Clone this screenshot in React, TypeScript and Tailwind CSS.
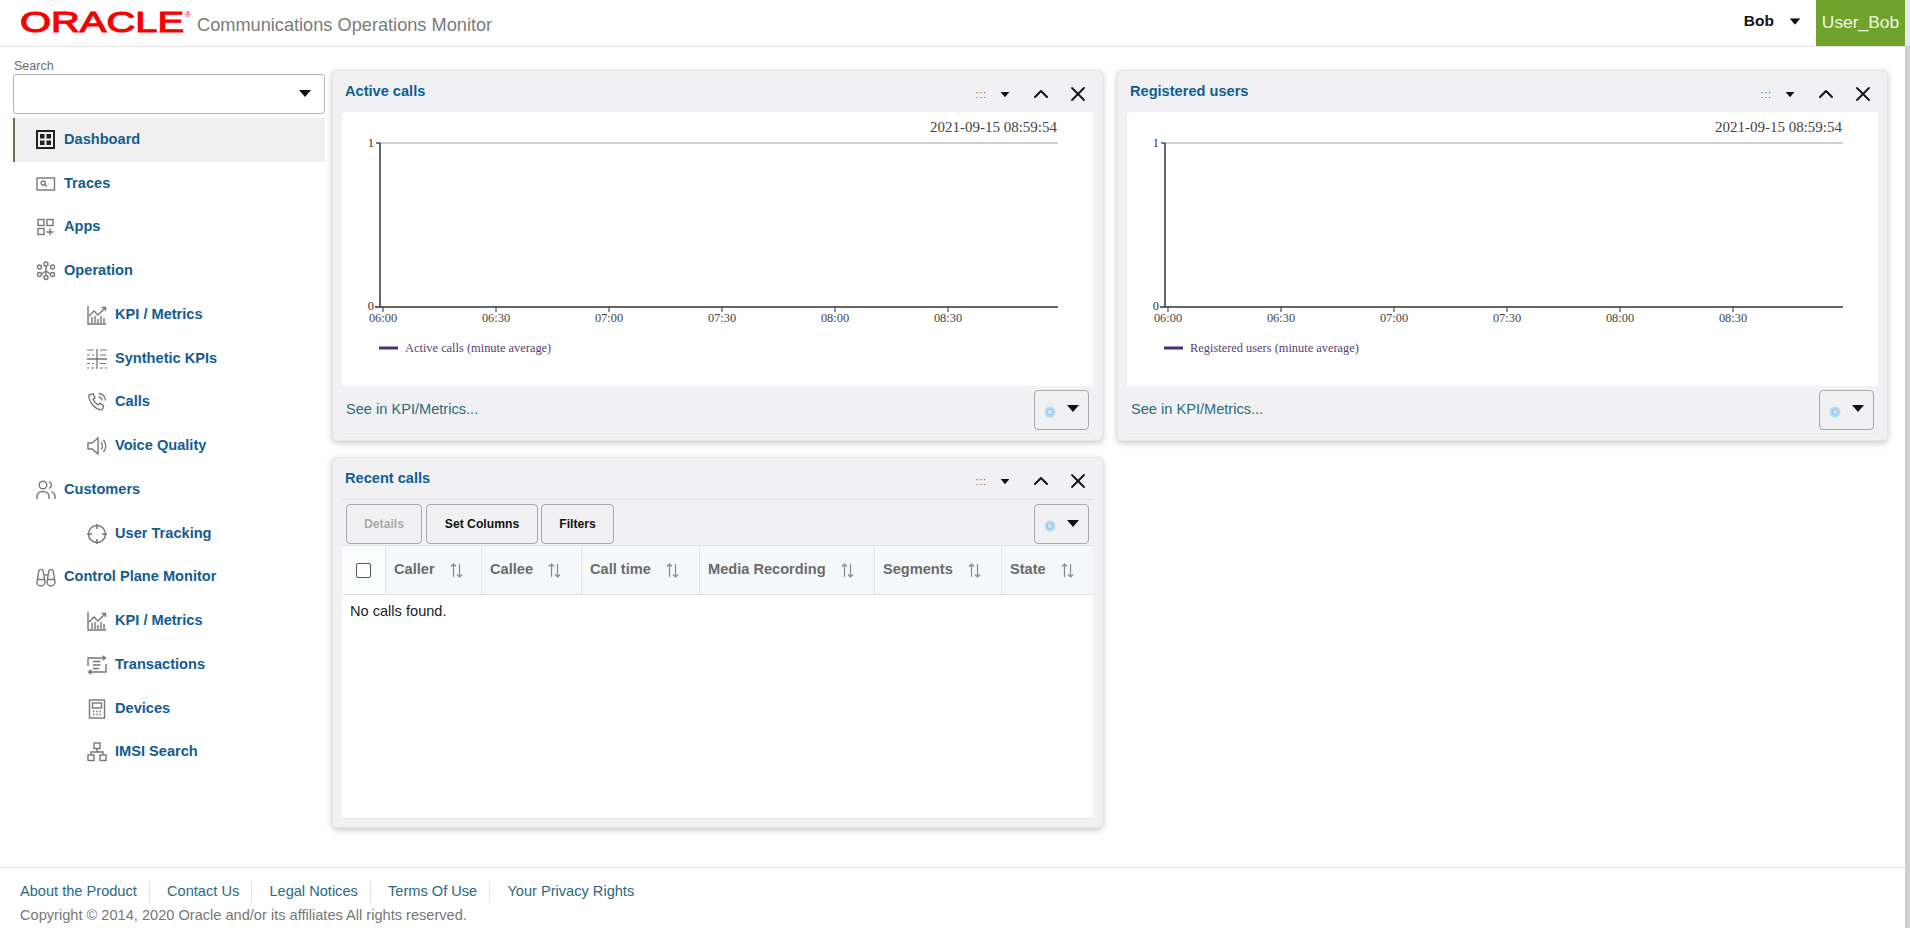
import { ChevronUp, X } from "lucide-react";
import type { ReactNode } from "react";

const ticks = ["06:00", "06:30", "07:00", "07:30", "08:00", "08:30"];

function Caret({ className = "" }: { className?: string }) {
  return (
    <svg width="12" height="7" viewBox="0 0 12 7" className={className}>
      <path d="M0 0h12L6 7z" fill="#111" />
    </svg>
  );
}

function Ic({ children }: { children: ReactNode }) {
  return (
    <svg width="20" height="20" viewBox="0 0 20 20" fill="none" stroke="#777" strokeWidth="1.4" className="shrink-0">
      {children}
    </svg>
  );
}

const icons: Record<string, ReactNode> = {
  dashboard: (
    <svg width="20" height="19" viewBox="0 0 20 19" className="shrink-0">
      <rect x="1" y="1" width="17" height="17" fill="none" stroke="#222" strokeWidth="2" />
      <path d="M4 4h4.5v4.5H4zM10.5 4H15v4.5h-4.5zM4 10.5h4.5V15H4zM10.5 10.5H15V15h-4.5z" fill="#222" />
    </svg>
  ),
  traces: (
    <Ic>
      <rect x="1" y="4" width="17.5" height="12" />
      <circle cx="7.2" cy="9" r="2" />
      <path d="M8.7 10.5l2 2" />
    </Ic>
  ),
  apps: (
    <Ic>
      <rect x="2" y="2.5" width="6" height="6" />
      <rect x="11" y="2.5" width="6" height="6" />
      <rect x="2" y="11.500" width="6" height="6" />
      <path d="M14 11.500v6.500M10.500 15h7" />
    </Ic>
  ),
  operation: (
    <Ic>
      <circle cx="10" cy="3" r="2" />
      <circle cx="3.500" cy="6" r="2" />
      <circle cx="16.500" cy="6" r="2" />
      <circle cx="3.500" cy="13.500" r="2" />
      <circle cx="16.500" cy="13.500" r="2" />
      <circle cx="10" cy="16.500" r="2" />
      <path d="M10 5v9.500M5.500 13l4.500-3 4.500 3" />
    </Ic>
  ),
  kpi: (
    <Ic>
      <path d="M1 1v18h18" />
      <path d="M2 11l5-5 4 4 7-7M14.500 2.500H18.500V6" />
      <path d="M5 18v-6M8 18v-7M11 18v-4M14 18v-7M17 18v-5" />
    </Ic>
  ),
  synthetic: (
    <svg width="20" height="20" viewBox="0 0 20 20" fill="none" stroke="#777" strokeWidth="1.100" className="shrink-0">
      <path d="M10 0v20M0 10h20" strokeWidth="1.300" />
      <path d="M0 1h7M13 1h7M0 6h3M5 6h2M13 6h6M0 14.500h3M5 14.500h2M13 14.500h6M0 19h2M4 19h3M13 19h3M18 19h2" />
    </svg>
  ),
  calls: (
    <Ic>
      <path d="M3 2.500l3.200-.8 1.800 4-1.900 1.600c.8 2.200 2.600 4.400 5 5.600l1.800-1.700 3.600 2.400-.8 3c-.3 1-1.200 1.400-2.300 1.200C7.700 16.500 2.800 11 1.800 5c-.2-1.200.2-2.200 1.200-2.500z" />
      <path d="M11.500 1.500a7 7 0 0 1 7 7M11.500 5a3.500 3.500 0 0 1 3.500 3.500" />
    </Ic>
  ),
  voice: (
    <Ic>
      <path d="M1 7v6h4l6 5V2L5 7z" />
      <path d="M14 6.500a5 5 0 0 1 0 7M16.500 4a9 9 0 0 1 0 12" />
    </Ic>
  ),
  customers: (
    <Ic>
      <circle cx="7" cy="5" r="3.800" />
      <path d="M1 19v-2.500c0-3 2.500-5 6-5s6 2 6 5V19" />
      <path d="M13 1.800a3.500 3.500 0 0 1 0 6.600M15.500 11.800c2 .8 3.500 2.400 3.500 4.700V19" />
    </Ic>
  ),
  tracking: (
    <Ic>
      <circle cx="10" cy="10" r="8.500" strokeWidth="1.500" />
      <path d="M10 0v5M10 15v5M0 10h5M15 10h5" strokeWidth="1.500" />
    </Ic>
  ),
  binoculars: (
    <Ic>
      <path d="M1 15L2.800 4a2.300 2.300 0 0 1 4.400 0L9 15a4 4 0 0 1-8 0z" />
      <path d="M11 15L12.800 4a2.300 2.300 0 0 1 4.400 0L19 15a4 4 0 0 1-8 0z" />
      <path d="M1.200 12.500h7.600M11.200 12.500h7.600M8.500 8h3" />
    </Ic>
  ),
  transactions: (
    <Ic>
      <path d="M1 11V3h17M15.500 .8L18.500 3l-3 2.200" />
      <path d="M19 9v8H2M4.500 14.800L1.500 17l3 2.200" />
      <path d="M6 6.500h7.500M6 10h7.500M6 13.500h6" />
    </Ic>
  ),
  devices: (
    <Ic>
      <rect x="2.500" y="1" width="15" height="18" />
      <rect x="5.500" y="4" width="9" height="5" />
      <path d="M6 12.500h1.500M9.300 12.500h1.500M12.500 12.500H14M6 15.500h1.500M9.300 15.500h1.500M12.500 15.500H14" />
    </Ic>
  ),
  imsi: (
    <Ic>
      <rect x="7" y="1" width="6" height="5.500" />
      <rect x="1" y="13" width="6" height="5.500" />
      <rect x="13" y="13" width="6" height="5.500" />
      <path d="M10 6.500V10M4 13v-3h12v3" />
    </Ic>
  ),
};

const menu = [
  { label: "Dashboard", icon: "dashboard", active: true },
  { label: "Traces", icon: "traces" },
  { label: "Apps", icon: "apps" },
  { label: "Operation", icon: "operation" },
  { label: "KPI / Metrics", icon: "kpi", sub: true },
  { label: "Synthetic KPIs", icon: "synthetic", sub: true },
  { label: "Calls", icon: "calls", sub: true },
  { label: "Voice Quality", icon: "voice", sub: true },
  { label: "Customers", icon: "customers" },
  { label: "User Tracking", icon: "tracking", sub: true },
  { label: "Control Plane Monitor", icon: "binoculars" },
  { label: "KPI / Metrics", icon: "kpi", sub: true },
  { label: "Transactions", icon: "transactions", sub: true },
  { label: "Devices", icon: "devices", sub: true },
  { label: "IMSI Search", icon: "imsi", sub: true },
];

function PanelHeader({ title }: { title: string }) {
  return (
    <div className="flex h-[41px] items-center pl-[12px] pr-[12px]">
      <h2 className="text-[14.6px] font-bold text-[#0f5f94]">{title}</h2>
      <div className="ml-auto mt-[4px] flex items-center text-[#111]">
        <span className="mr-[12px] mt-[2px] text-[10px] leading-none tracking-[1px] text-[#555]">:::</span>
        <Caret className="mr-[18px] mt-[2px] scale-75" />
        <ChevronUp size={24} strokeWidth={2} className="mr-[13px]" />
        <X size={24} strokeWidth={1.8} />
      </div>
    </div>
  );
}

function SettingsButton() {
  return (
    <button className="flex h-[40px] w-[55px] items-center justify-center gap-[11px] rounded-[4px] border border-[#a8a8a8] bg-[#f1f1f3]">
      <svg width="12" height="12" viewBox="0 0 12 12" className="mt-[4px]">
        <circle cx="6" cy="6" r="5.500" fill="#b9d9f5" />
        <circle cx="6" cy="6" r="2.800" fill="#cfe4f7" stroke="#92c2ec" />
      </svg>
      <Caret className="-mt-[2px]" />
    </button>
  );
}

function Chart({ legend }: { legend: string }) {
  return (
    <svg width="751" height="274" viewBox="0 0 751 274" className="block">
      <g fontFamily="'Liberation Serif', serif">
        <text x="715" y="20" textAnchor="end" fontSize="15" fill="#444">2021-09-15 08:59:54</text>
        <line x1="34" y1="31" x2="716" y2="31" stroke="#cfcfcf" strokeWidth="2" />
        <line x1="38" y1="31" x2="38" y2="195" stroke="#333" strokeWidth="1.500" />
        <line x1="33" y1="195" x2="716" y2="195" stroke="#333" strokeWidth="1.500" />
        <line x1="34" y1="31" x2="38" y2="31" stroke="#333" />
        <text x="32" y="35" textAnchor="end" fontSize="12.400" fill="#333">1</text>
        <text x="32" y="198" textAnchor="end" fontSize="12.400" fill="#333">0</text>
        {ticks.map((t, i) => (
          <g key={t}>
            <line x1={41 + i * 113} y1="195" x2={41 + i * 113} y2="200" stroke="#333" />
            <text x={41 + i * 113} y="210" textAnchor="middle" fontSize="12.400" fill="#444">{t}</text>
          </g>
        ))}
        <line x1="37" y1="236" x2="56" y2="236" stroke="#4b2e6e" strokeWidth="3" />
        <text x="63" y="240" fontSize="12.400" fill="#5a3e74">{legend}</text>
      </g>
    </svg>
  );
}

function ChartPanel({ title, legend }: { title: string; legend: string }) {
  return (
    <section className="h-[371px] rounded-[5px] border border-[#e6e6e8] bg-[#f1f1f3] shadow-[0_2px_6px_rgba(0,0,0,0.22)]">
      <PanelHeader title={title} />
      <div className="mx-[9px] rounded-t-[4px] border-b border-[#e8e8ea]">
        <div className="rounded-t-[4px] bg-white">
          <Chart legend={legend} />
        </div>
        <div className="flex h-[47px] items-center justify-between pl-[4px] pr-[4px]">
          <a className="text-[14.6px] text-[#2a6a80]">See in KPI/Metrics...</a>
          <SettingsButton />
        </div>
      </div>
    </section>
  );
}

const columns = [
  { label: "Caller", w: "w-[96px]" },
  { label: "Callee", w: "w-[100px]" },
  { label: "Call time", w: "w-[118px]" },
  { label: "Media Recording", w: "w-[175px]" },
  { label: "Segments", w: "w-[127px]" },
  { label: "State", w: "flex-1" },
];

function SortIcon() {
  return (
    <svg width="13" height="15" viewBox="0 0 13 15" fill="none" stroke="#7d8a94" strokeWidth="1.200" className="ml-[15px] shrink-0">
      <path d="M3.500 14V1M1 3.500L3.500 1 6 3.500M9.500 1v13M7 11.500L9.500 14l2.500-2.500" />
    </svg>
  );
}

function RecentCalls() {
  const btn = "h-[40px] rounded-[4px] border border-[#a8a8a8] bg-[#f1f1f3] text-[12.2px] font-bold";
  return (
    <section className="h-[371px] rounded-[5px] border border-[#e6e6e8] bg-[#f1f1f3] shadow-[0_2px_6px_rgba(0,0,0,0.22)]">
      <PanelHeader title="Recent calls" />
      <div className="mx-[9px] flex h-[320px] flex-col border-b border-[#e4e4e6] bg-white">
        <div className="flex h-[47px] shrink-0 items-start border-y border-[#e2e2e4] bg-[#f1f1f3] pl-[4px] pr-[4px] pt-[4px]">
          <button className={`${btn} w-[76px] text-[#aaa]`}>Details</button>
          <button className={`${btn} ml-[4px] w-[112px] text-[#111]`}>Set Columns</button>
          <button className={`${btn} ml-[3px] w-[73px] text-[#111]`}>Filters</button>
          <div className="ml-auto">
            <SettingsButton />
          </div>
        </div>
        <div className="flex h-[49px] shrink-0 border-b border-[#e0e0e0] bg-[#f5f8fb]">
          <div className="flex w-[43px] items-center justify-center bg-white/50">
            <span className="block h-[15px] w-[15px] rounded-[2px] border-[1.5px] border-[#555] bg-white" />
          </div>
          {columns.map((c) => (
            <div key={c.label} className={`${c.w} flex items-center border-l border-[#e3e5e8] pl-[8px] text-[14.6px] font-bold text-[#6b6b6b]`}>
              {c.label}
              <SortIcon />
            </div>
          ))}
        </div>
        <p className="pl-[8px] pt-[6px] text-[14.6px] text-[#222]">No calls found.</p>
      </div>
    </section>
  );
}

function Sidebar() {
  return (
    <aside className="w-[332px] shrink-0 pl-[13px] pr-[7px] pt-[11px]">
      <label className="block pl-px text-[12.5px] leading-[16px] text-[#6d6d6d]">Search</label>
      <div className="flex h-[40px] items-center justify-end rounded-[3px] border border-[#b5b5b5] pb-[2px] pr-[13px]">
        <Caret />
      </div>
      <nav className="mt-[4px]">
        {menu.map((m, i) => (
          <a
            key={i}
            className={`flex h-[43.75px] items-center text-[14.6px] font-bold text-[#145c8f] ${m.sub ? "pl-[74px]" : "pl-[23px]"} ${m.active ? "border-l-2 border-[#5e7a4e] bg-[#f0f0f0] !pl-[21px]" : ""}`}
          >
            {icons[m.icon]}
            <span className="ml-[8px]">{m.label}</span>
          </a>
        ))}
      </nav>
    </aside>
  );
}

const footerLinks = ["About the Product", "Contact Us", "Legal Notices", "Terms Of Use", "Your Privacy Rights"];

export default function App() {
  return (
    <div className="flex h-[928px] w-[1910px] overflow-hidden bg-white font-['Liberation_Sans',Arial,sans-serif]">
      <div className="flex min-w-0 flex-1 flex-col">
        <header className="flex h-[47px] shrink-0 items-center border-b border-[#e3e3e3] pl-[20px]">
          <svg width="172" height="34" viewBox="0 0 172 34" className="-mt-[5px] shrink-0 overflow-visible">
            <text x="0" y="28" fontFamily="'Liberation Sans', sans-serif" fontWeight="400" fontSize="30" fill="#f80000" stroke="#f80000" strokeWidth="1.100" textLength="164" lengthAdjust="spacingAndGlyphs">ORACLE</text>
            <text x="165" y="13" fontFamily="'Liberation Sans', sans-serif" fontSize="8" fill="#f80000">®</text>
          </svg>
          <span className="ml-[5px] mt-[6px] text-[18.2px] text-[#7b7b7b]">Communications Operations Monitor</span>
          <div className="ml-auto flex h-[46px] items-center">
            <span className="-mt-[4px] text-[15.5px] font-bold text-[#111]">Bob</span>
            <Caret className="-mt-[4px] ml-[15px] scale-90" />
            <div className="ml-[15px] flex h-full w-[89px] items-center justify-center bg-[#6fa32b] pb-[2px] text-[17.4px] text-[#eef8e0]">User_Bob</div>
          </div>
        </header>
        <div className="flex min-h-0 flex-1">
          <Sidebar />
          <main className="grid grid-cols-[771px_771px] content-start gap-x-[14px] gap-y-[16px] pt-[23px]">
            <ChartPanel title="Active calls" legend="Active calls (minute average)" />
            <ChartPanel title="Registered users" legend="Registered users (minute average)" />
            <RecentCalls />
          </main>
        </div>
        <footer className="h-[61px] shrink-0 border-t border-[#e3e3e3] pl-[20px] pt-[13px] text-[14.6px]">
          <div className="flex h-[22px] items-center text-[#2a6a80]">
            {footerLinks.map((l, i) => (
              <a key={l} className={i < footerLinks.length - 1 ? "mr-[17.2px] border-r border-[#e3e3e3] pr-[12px]" : ""}>{l}</a>
            ))}
          </div>
          <p className="mt-[2px] text-[#777]">Copyright © 2014, 2020 Oracle and/or its affiliates All rights reserved.</p>
        </footer>
      </div>
      <div className="flex w-[5px] shrink-0 flex-col bg-[#cfcfcf]">
        <div className="h-[46px] bg-[#e9e9e9]" />
      </div>
    </div>
  );
}
